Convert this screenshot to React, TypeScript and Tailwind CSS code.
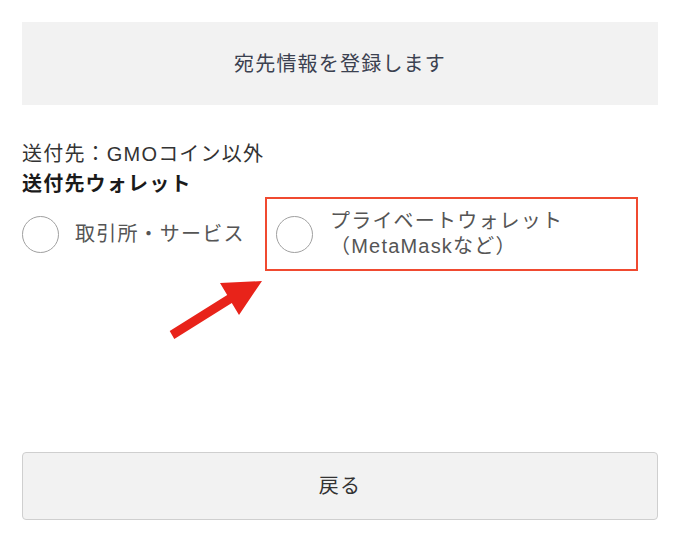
const font = { fontFamily: '"Liberation Sans", "Noto Sans CJK JP", sans-serif' };

function Radio() {
  return <span className="block w-[37px] h-[37px] shrink-0 rounded-full border-[1.5px] border-[#a0a0a0] bg-white" />;
}

export default function App() {
  return (
    <div style={font} className="relative w-[680px] h-[544px] bg-white flex flex-col px-[22px] pt-[22px] pb-[24px] overflow-hidden">
      {/* 見出し */}
      <div className="h-[83px] bg-[#f2f2f2] flex items-center justify-center text-[20px] tracking-[1.2px] text-[#3b4150]">
        宛先情報を登録します
      </div>

      <div className="mt-[35px] leading-[28px] text-[20px] tracking-[1.2px] text-[#333]">送付先：GMOコイン以外</div>
      <div className="pt-[3px] leading-[26px] text-[20px] tracking-[1.2px] font-bold text-[#1a1a1a]">送付先ウォレット</div>

      {/* 送付先の選択肢 */}
      <div className="flex items-center h-[74px]">
        <label className="w-[243px] flex items-center">
          <Radio />
          <span className="ml-[16px] text-[20px] tracking-[1.2px] text-[#555]">取引所・サービス</span>
        </label>
        <label className="w-[373px] h-[74px] border-2 border-[#f04a30] flex items-center pl-[9px]">
          <Radio />
          <span className="ml-[17px] text-[20px] leading-[25px] tracking-[1.2px] text-[#555]">
            プライベートウォレット
            <br />
            （MetaMaskなど）
          </span>
        </label>
      </div>

      <button className="mt-auto h-[68px] w-full rounded-[4px] border border-[#cfcfcf] bg-[#f2f2f2] text-[20px] tracking-[1.2px] text-[#333]">
        戻る
      </button>

      {/* 注釈の矢印 */}
      <svg className="absolute inset-0 pointer-events-none" width="680" height="544" viewBox="0 0 680 544">
        <polygon
          fill="#e8231a"
          points="169.7,331.1 227.2,295.1 220,283 262,281 239,315 231.8,302.9 174.3,338.9"
        />
      </svg>
    </div>
  );
}
